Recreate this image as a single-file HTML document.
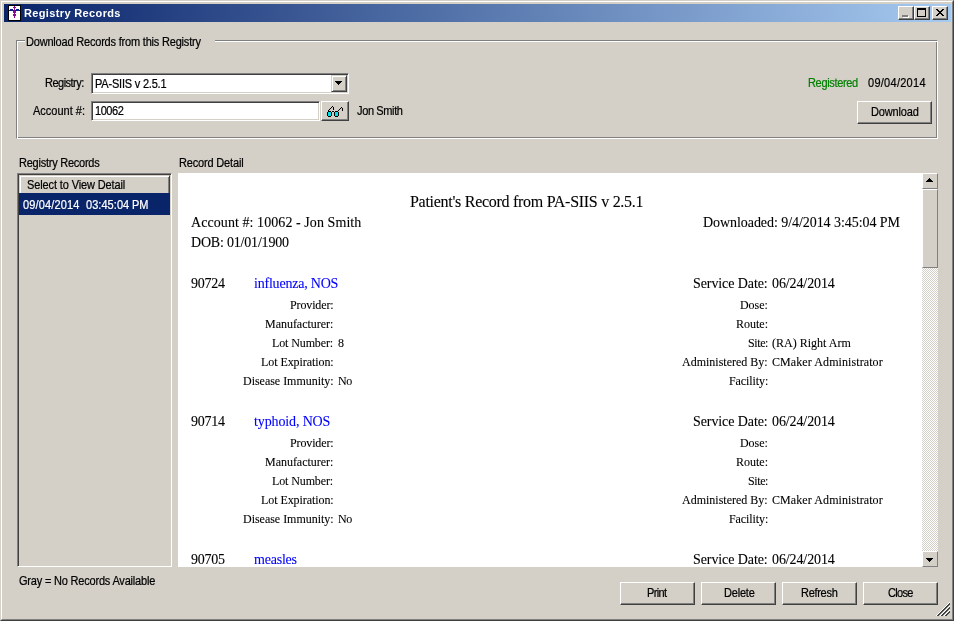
<!DOCTYPE html>
<html><head><meta charset="utf-8"><title>Registry Records</title>
<style>
html,body{margin:0;padding:0;}
body{width:954px;height:621px;overflow:hidden;background:#d4d0c8;position:relative;font-family:'Liberation Sans',sans-serif;font-size:11px;}
div{position:absolute;box-sizing:border-box;}
.t{white-space:pre;line-height:1;will-change:transform;-webkit-text-stroke:0.2px currentColor;}
.btn{background:#d4d0c8;border:1px solid;border-color:#fff #404040 #404040 #fff;box-shadow:inset -1px -1px 0 #808080;}
.sunk{background:#fff;border:1px solid;border-color:#808080 #fff #fff #808080;box-shadow:inset 1px 1px 0 #404040,inset -1px -1px 0 #d4d0c8;}
</style></head><body>

<div style="left:0;top:0;width:954px;height:621px;border:1px solid;border-color:#d4d0c8 #404040 #404040 #d4d0c8;"></div>
<div style="left:1px;top:1px;width:952px;height:619px;border:1px solid;border-color:#fff #808080 #808080 #fff;"></div>
<div style="left:4px;top:4px;width:947px;height:18px;background:linear-gradient(to right,#0a246a,#a6caf0);"></div>
<svg style="position:absolute;left:8px;top:5px" width="13" height="16" shape-rendering="crispEdges">
<rect x="0" y="0" width="13" height="16" fill="#000"/><rect x="1" y="1" width="11" height="14" fill="#fff"/>
<rect x="1" y="5" width="11" height="1" fill="#0a1e8c"/><rect x="2" y="4" width="3" height="1" fill="#0a1e8c"/><rect x="8" y="4" width="3" height="1" fill="#0a1e8c"/>
<rect x="6" y="1" width="1" height="12" fill="#8a0a96"/><rect x="5" y="2" width="3" height="1" fill="#8a0a96"/>
<rect x="5" y="6" width="3" height="2" fill="#8a0a96"/><rect x="5" y="9" width="3" height="2" fill="#8a0a96"/>
</svg>
<div class="btn" style="left:898px;top:6px;width:16px;height:14px;"></div>
<div class="btn" style="left:914px;top:6px;width:16px;height:14px;"></div>
<div class="btn" style="left:932px;top:6px;width:16px;height:14px;"></div>
<div style="left:902px;top:15px;width:6px;height:2px;background:#808080;box-shadow:1px 1px 0 #fff;"></div>
<div style="left:917px;top:8px;width:9px;height:9px;border:1px solid #000;border-top-width:2px;"></div>
<svg style="position:absolute;left:936px;top:9px" width="8" height="7" shape-rendering="crispEdges">
<path d="M0 0h2v1h-2zM6 0h2v1h-2zM1 1h2v1h-2zM5 1h2v1h-2zM2 2h4v1h-4zM3 3h2v1h-2zM2 4h4v1h-4zM1 5h2v1h-2zM5 5h2v1h-2zM0 6h2v1h-2zM6 6h2v1h-2z" fill="#000"/>
</svg>
<div style="left:16px;top:40px;width:922px;height:99px;border:1px solid;border-color:#808080 #fff #fff #808080;box-shadow:inset 1px 1px 0 #fff,inset -1px -1px 0 #808080;"></div>
<div style="left:25px;top:38px;width:190px;height:6px;background:#d4d0c8;"></div>
<div class="sunk" style="left:91px;top:73px;width:258px;height:21px;"></div>
<div style="left:331px;top:75px;width:16px;height:17px;background:#d4d0c8;border:1px solid;border-color:#d4d0c8 #404040 #404040 #d4d0c8;box-shadow:inset 1px 1px 0 #fff,inset -1px -1px 0 #808080;"></div>
<svg style="position:absolute;left:335px;top:81px" width="7" height="4" shape-rendering="crispEdges"><path d="M0 0h7v1h-7zM1 1h5v1h-5zM2 2h3v1h-3zM3 3h1v1h-1z" fill="#000"/></svg>
<div class="sunk" style="left:91px;top:101px;width:229px;height:20px;"></div>
<div class="btn" style="left:321px;top:101px;width:28px;height:20px;"></div>
<svg style="position:absolute;left:327px;top:106px" width="16" height="11" shape-rendering="crispEdges">
<g fill="#000">
<rect x="1" y="5" width="3" height="1"/><rect x="0" y="6" width="1" height="4"/><rect x="4" y="6" width="1" height="4"/><rect x="1" y="10" width="3" height="1"/>
<rect x="8" y="5" width="3" height="1"/><rect x="7" y="6" width="1" height="4"/><rect x="11" y="6" width="1" height="4"/><rect x="8" y="10" width="3" height="1"/>
<rect x="5" y="5" width="2" height="1"/>
<rect x="1" y="4" width="1" height="1"/><rect x="2" y="3" width="1" height="1"/><rect x="3" y="2" width="1" height="1"/><rect x="4" y="1" width="1" height="1"/><rect x="5" y="0" width="1" height="1"/><rect x="6" y="1" width="1" height="3"/>
<rect x="11" y="4" width="1" height="1"/><rect x="12" y="3" width="1" height="1"/><rect x="13" y="2" width="1" height="1"/><rect x="14" y="1" width="1" height="1"/><rect x="15" y="2" width="1" height="3"/>
</g>
<rect x="1" y="6" width="3" height="4" fill="#00e0e8"/><rect x="8" y="6" width="3" height="4" fill="#00e0e8"/>
</svg>
<div class="btn" style="left:857px;top:101px;width:75px;height:23px;"></div>
<div class="sunk" style="left:17px;top:173px;width:155px;height:394px;background:#d4d0c8;"></div>
<div style="left:19px;top:175px;width:151px;height:18px;background:#d4d0c8;border:1px solid;border-width:1px 1px 0 1px;border-color:#d4d0c8 #404040 #404040 #d4d0c8;box-shadow:inset 1px 1px 0 #fff,inset -1px 0 0 #808080;"></div>
<div style="left:19px;top:193px;width:151px;height:22px;background:#0a246a;"></div>
<div id="detail" style="left:178px;top:173px;width:760px;height:394px;background:#fff;overflow:hidden;">
<div class="t" id="ptitle" style="left:232px;top:21px;font-size:16px;color:#000;letter-spacing:-0.281px;font-family:'Liberation Serif', serif;-webkit-text-stroke:0.1px currentColor">Patient&#39;s Record from PA-SIIS v 2.5.1</div>
<div class="t" id="pacc" style="left:13px;top:43px;font-size:14px;color:#000;letter-spacing:0.071px;font-family:'Liberation Serif', serif;-webkit-text-stroke:0.1px currentColor">Account #: 10062 - Jon Smith</div>
<div class="t" id="pdl" style="left:525px;top:43px;font-size:14px;color:#000;letter-spacing:-0.058px;font-family:'Liberation Serif', serif;-webkit-text-stroke:0.1px currentColor">Downloaded: 9/4/2014 3:45:04 PM</div>
<div class="t" id="dob" style="left:13px;top:63px;font-size:14px;color:#000;letter-spacing:-0.195px;font-family:'Liberation Serif', serif;-webkit-text-stroke:0.1px currentColor">DOB: 01/01/1900</div>
<div class="t" id="c90724_0" style="left:13px;top:104px;font-size:14px;color:#000;letter-spacing:-0.275px;font-family:'Liberation Serif', serif;-webkit-text-stroke:0.1px currentColor">90724</div>
<div class="t" id="flu_0" style="left:76px;top:104px;font-size:14px;color:#0000ff;letter-spacing:-0.207px;font-family:'Liberation Serif', serif;-webkit-text-stroke:0.1px currentColor">influenza, NOS</div>
<div class="t" id="sd_0" style="left:515px;top:104px;font-size:14px;color:#000;letter-spacing:-0.091px;font-family:'Liberation Serif', serif;-webkit-text-stroke:0.1px currentColor">Service Date:</div>
<div class="t" id="sdv_0" style="left:594px;top:104px;font-size:14px;color:#000;letter-spacing:-0.109px;font-family:'Liberation Serif', serif;-webkit-text-stroke:0.1px currentColor">06/24/2014</div>
<div class="t" id="prov_0" style="left:111.89999999999998px;top:126px;font-size:12px;color:#000;letter-spacing:-0.134px;font-family:'Liberation Serif', serif;-webkit-text-stroke:0.1px currentColor">Provider:</div>
<div class="t" id="dose_0" style="left:562.2px;top:126px;font-size:12px;color:#000;letter-spacing:-0.05px;font-family:'Liberation Serif', serif;-webkit-text-stroke:0.1px currentColor">Dose:</div>
<div class="t" id="manu_0" style="left:87.19999999999999px;top:145px;font-size:12px;color:#000;letter-spacing:-0.028px;font-family:'Liberation Serif', serif;-webkit-text-stroke:0.1px currentColor">Manufacturer:</div>
<div class="t" id="route_0" style="left:558px;top:145px;font-size:12px;color:#000;letter-spacing:0.0px;font-family:'Liberation Serif', serif;-webkit-text-stroke:0.1px currentColor">Route:</div>
<div class="t" id="lotn_0" style="left:94.30000000000001px;top:164px;font-size:12px;color:#000;letter-spacing:-0.113px;font-family:'Liberation Serif', serif;-webkit-text-stroke:0.1px currentColor">Lot Number:</div>
<div class="t" id="eight_0" style="left:160px;top:164px;font-size:12px;color:#000;letter-spacing:0px;font-family:'Liberation Serif', serif;-webkit-text-stroke:0.1px currentColor">8</div>
<div class="t" id="site_0" style="left:569.6px;top:164px;font-size:12px;color:#000;letter-spacing:-0.404px;font-family:'Liberation Serif', serif;-webkit-text-stroke:0.1px currentColor">Site:</div>
<div class="t" id="ra_0" style="left:594px;top:164px;font-size:12px;color:#000;letter-spacing:0.01px;font-family:'Liberation Serif', serif;-webkit-text-stroke:0.1px currentColor">(RA) Right Arm</div>
<div class="t" id="lote_0" style="left:82.80000000000001px;top:183px;font-size:12px;color:#000;letter-spacing:-0.068px;font-family:'Liberation Serif', serif;-webkit-text-stroke:0.1px currentColor">Lot Expiration:</div>
<div class="t" id="adm_0" style="left:504.29999999999995px;top:183px;font-size:12px;color:#000;letter-spacing:0.002px;font-family:'Liberation Serif', serif;-webkit-text-stroke:0.1px currentColor">Administered By:</div>
<div class="t" id="cmaker_0" style="left:594px;top:183px;font-size:12px;color:#000;letter-spacing:0.09px;font-family:'Liberation Serif', serif;-webkit-text-stroke:0.1px currentColor">CMaker Administrator</div>
<div class="t" id="dis_0" style="left:64.9px;top:202px;font-size:12px;color:#000;letter-spacing:-0.024px;font-family:'Liberation Serif', serif;-webkit-text-stroke:0.1px currentColor">Disease Immunity:</div>
<div class="t" id="no_0" style="left:160px;top:202px;font-size:12px;color:#000;letter-spacing:-0.472px;font-family:'Liberation Serif', serif;-webkit-text-stroke:0.1px currentColor">No</div>
<div class="t" id="fac_0" style="left:550.7px;top:202px;font-size:12px;color:#000;letter-spacing:-0.088px;font-family:'Liberation Serif', serif;-webkit-text-stroke:0.1px currentColor">Facility:</div>
<div class="t" id="c90724_1" style="left:13px;top:242px;font-size:14px;color:#000;letter-spacing:-0.275px;font-family:'Liberation Serif', serif;-webkit-text-stroke:0.1px currentColor">90714</div>
<div class="t" id="typh_1" style="left:76px;top:242px;font-size:14px;color:#0000ff;letter-spacing:-0.127px;font-family:'Liberation Serif', serif;-webkit-text-stroke:0.1px currentColor">typhoid, NOS</div>
<div class="t" id="sd_1" style="left:515px;top:242px;font-size:14px;color:#000;letter-spacing:-0.091px;font-family:'Liberation Serif', serif;-webkit-text-stroke:0.1px currentColor">Service Date:</div>
<div class="t" id="sdv_1" style="left:594px;top:242px;font-size:14px;color:#000;letter-spacing:-0.109px;font-family:'Liberation Serif', serif;-webkit-text-stroke:0.1px currentColor">06/24/2014</div>
<div class="t" id="prov_1" style="left:111.89999999999998px;top:264px;font-size:12px;color:#000;letter-spacing:-0.134px;font-family:'Liberation Serif', serif;-webkit-text-stroke:0.1px currentColor">Provider:</div>
<div class="t" id="dose_1" style="left:562.2px;top:264px;font-size:12px;color:#000;letter-spacing:-0.05px;font-family:'Liberation Serif', serif;-webkit-text-stroke:0.1px currentColor">Dose:</div>
<div class="t" id="manu_1" style="left:87.19999999999999px;top:283px;font-size:12px;color:#000;letter-spacing:-0.028px;font-family:'Liberation Serif', serif;-webkit-text-stroke:0.1px currentColor">Manufacturer:</div>
<div class="t" id="route_1" style="left:558px;top:283px;font-size:12px;color:#000;letter-spacing:0.0px;font-family:'Liberation Serif', serif;-webkit-text-stroke:0.1px currentColor">Route:</div>
<div class="t" id="lotn_1" style="left:94.30000000000001px;top:302px;font-size:12px;color:#000;letter-spacing:-0.113px;font-family:'Liberation Serif', serif;-webkit-text-stroke:0.1px currentColor">Lot Number:</div>
<div class="t" id="site_1" style="left:569.6px;top:302px;font-size:12px;color:#000;letter-spacing:-0.404px;font-family:'Liberation Serif', serif;-webkit-text-stroke:0.1px currentColor">Site:</div>
<div class="t" id="lote_1" style="left:82.80000000000001px;top:321px;font-size:12px;color:#000;letter-spacing:-0.068px;font-family:'Liberation Serif', serif;-webkit-text-stroke:0.1px currentColor">Lot Expiration:</div>
<div class="t" id="adm_1" style="left:504.29999999999995px;top:321px;font-size:12px;color:#000;letter-spacing:0.002px;font-family:'Liberation Serif', serif;-webkit-text-stroke:0.1px currentColor">Administered By:</div>
<div class="t" id="cmaker_1" style="left:594px;top:321px;font-size:12px;color:#000;letter-spacing:0.09px;font-family:'Liberation Serif', serif;-webkit-text-stroke:0.1px currentColor">CMaker Administrator</div>
<div class="t" id="dis_1" style="left:64.9px;top:340px;font-size:12px;color:#000;letter-spacing:-0.024px;font-family:'Liberation Serif', serif;-webkit-text-stroke:0.1px currentColor">Disease Immunity:</div>
<div class="t" id="no_1" style="left:160px;top:340px;font-size:12px;color:#000;letter-spacing:-0.472px;font-family:'Liberation Serif', serif;-webkit-text-stroke:0.1px currentColor">No</div>
<div class="t" id="fac_1" style="left:550.7px;top:340px;font-size:12px;color:#000;letter-spacing:-0.088px;font-family:'Liberation Serif', serif;-webkit-text-stroke:0.1px currentColor">Facility:</div>
<div class="t" id="c90724_2" style="left:13px;top:380px;font-size:14px;color:#000;letter-spacing:-0.275px;font-family:'Liberation Serif', serif;-webkit-text-stroke:0.1px currentColor">90705</div>
<div class="t" id="meas_2" style="left:76px;top:380px;font-size:14px;color:#0000ff;letter-spacing:-0.221px;font-family:'Liberation Serif', serif;-webkit-text-stroke:0.1px currentColor">measles</div>
<div class="t" id="sd_2" style="left:515px;top:380px;font-size:14px;color:#000;letter-spacing:-0.091px;font-family:'Liberation Serif', serif;-webkit-text-stroke:0.1px currentColor">Service Date:</div>
<div class="t" id="sdv_2" style="left:594px;top:380px;font-size:14px;color:#000;letter-spacing:-0.109px;font-family:'Liberation Serif', serif;-webkit-text-stroke:0.1px currentColor">06/24/2014</div>
<div class="t" id="prov_2" style="left:111.89999999999998px;top:402px;font-size:12px;color:#000;letter-spacing:-0.134px;font-family:'Liberation Serif', serif;-webkit-text-stroke:0.1px currentColor">Provider:</div>
<div class="t" id="dose_2" style="left:562.2px;top:402px;font-size:12px;color:#000;letter-spacing:-0.05px;font-family:'Liberation Serif', serif;-webkit-text-stroke:0.1px currentColor">Dose:</div>
<div class="t" id="manu_2" style="left:87.19999999999999px;top:421px;font-size:12px;color:#000;letter-spacing:-0.028px;font-family:'Liberation Serif', serif;-webkit-text-stroke:0.1px currentColor">Manufacturer:</div>
<div class="t" id="route_2" style="left:558px;top:421px;font-size:12px;color:#000;letter-spacing:0.0px;font-family:'Liberation Serif', serif;-webkit-text-stroke:0.1px currentColor">Route:</div>
<div class="t" id="lotn_2" style="left:94.30000000000001px;top:440px;font-size:12px;color:#000;letter-spacing:-0.113px;font-family:'Liberation Serif', serif;-webkit-text-stroke:0.1px currentColor">Lot Number:</div>
<div class="t" id="site_2" style="left:569.6px;top:440px;font-size:12px;color:#000;letter-spacing:-0.404px;font-family:'Liberation Serif', serif;-webkit-text-stroke:0.1px currentColor">Site:</div>
<div class="t" id="lote_2" style="left:82.80000000000001px;top:459px;font-size:12px;color:#000;letter-spacing:-0.068px;font-family:'Liberation Serif', serif;-webkit-text-stroke:0.1px currentColor">Lot Expiration:</div>
<div class="t" id="adm_2" style="left:504.29999999999995px;top:459px;font-size:12px;color:#000;letter-spacing:0.002px;font-family:'Liberation Serif', serif;-webkit-text-stroke:0.1px currentColor">Administered By:</div>
<div class="t" id="dis_2" style="left:64.9px;top:478px;font-size:12px;color:#000;letter-spacing:-0.024px;font-family:'Liberation Serif', serif;-webkit-text-stroke:0.1px currentColor">Disease Immunity:</div>
<div class="t" id="fac_2" style="left:550.7px;top:478px;font-size:12px;color:#000;letter-spacing:-0.088px;font-family:'Liberation Serif', serif;-webkit-text-stroke:0.1px currentColor">Facility:</div>
</div>
<div style="left:922px;top:173px;width:16px;height:394px;background-color:#fff;background-image:conic-gradient(#d4d0c8 25%,#fff 0 50%,#d4d0c8 0 75%,#fff 0);background-size:2px 2px;"></div>
<div style="left:922px;top:173px;width:16px;height:16px;background:#d4d0c8;border:1px solid;border-color:#fff #808080 #808080 #fff;"></div>
<div style="left:922px;top:189px;width:16px;height:79px;background:#d4d0c8;border:1px solid;border-color:#fff #808080 #808080 #fff;"></div>
<div style="left:922px;top:551px;width:16px;height:16px;background:#d4d0c8;border:1px solid;border-color:#fff #808080 #808080 #fff;"></div>
<svg style="position:absolute;left:926px;top:178px" width="7" height="4" shape-rendering="crispEdges"><path d="M3 0h1v1h-1zM2 1h3v1h-3zM1 2h5v1h-5zM0 3h7v1h-7z" fill="#000"/></svg>
<svg style="position:absolute;left:926px;top:558px" width="7" height="4" shape-rendering="crispEdges"><path d="M0 0h7v1h-7zM1 1h5v1h-5zM2 2h3v1h-3zM3 3h1v1h-1z" fill="#000"/></svg>
<div class="btn" style="left:620px;top:582px;width:75px;height:23px;"></div>
<div class="btn" style="left:701px;top:582px;width:75px;height:23px;"></div>
<div class="btn" style="left:782px;top:582px;width:75px;height:23px;"></div>
<div class="btn" style="left:863px;top:582px;width:75px;height:23px;"></div>
<svg style="position:absolute;left:936px;top:602px" width="14" height="14" shape-rendering="crispEdges"><path d="M0 13h1v1h-1zM1 12h1v1h-1zM2 11h1v1h-1zM3 10h1v1h-1zM4 9h1v1h-1zM4 13h1v1h-1zM5 8h1v1h-1zM5 12h1v1h-1zM6 7h1v1h-1zM6 11h1v1h-1zM7 6h1v1h-1zM7 10h1v1h-1zM8 5h1v1h-1zM8 9h1v1h-1zM8 13h1v1h-1zM9 4h1v1h-1zM9 8h1v1h-1zM9 12h1v1h-1zM10 3h1v1h-1zM10 7h1v1h-1zM10 11h1v1h-1zM11 2h1v1h-1zM11 6h1v1h-1zM11 10h1v1h-1zM12 1h1v1h-1zM12 5h1v1h-1zM12 9h1v1h-1zM13 0h1v1h-1zM13 4h1v1h-1zM13 8h1v1h-1z" fill="#fff"/><path d="M1 13h1v1h-1zM2 12h1v1h-1zM2 13h1v1h-1zM3 11h1v1h-1zM3 12h1v1h-1zM4 10h1v1h-1zM4 11h1v1h-1zM5 9h1v1h-1zM5 10h1v1h-1zM5 13h1v1h-1zM6 8h1v1h-1zM6 9h1v1h-1zM6 12h1v1h-1zM6 13h1v1h-1zM7 7h1v1h-1zM7 8h1v1h-1zM7 11h1v1h-1zM7 12h1v1h-1zM8 6h1v1h-1zM8 7h1v1h-1zM8 10h1v1h-1zM8 11h1v1h-1zM9 5h1v1h-1zM9 6h1v1h-1zM9 9h1v1h-1zM9 10h1v1h-1zM9 13h1v1h-1zM10 4h1v1h-1zM10 5h1v1h-1zM10 8h1v1h-1zM10 9h1v1h-1zM10 12h1v1h-1zM10 13h1v1h-1zM11 3h1v1h-1zM11 4h1v1h-1zM11 7h1v1h-1zM11 8h1v1h-1zM11 11h1v1h-1zM11 12h1v1h-1zM12 2h1v1h-1zM12 3h1v1h-1zM12 6h1v1h-1zM12 7h1v1h-1zM12 10h1v1h-1zM12 11h1v1h-1zM13 1h1v1h-1zM13 2h1v1h-1zM13 5h1v1h-1zM13 6h1v1h-1zM13 9h1v1h-1zM13 10h1v1h-1z" fill="#454545"/></svg>
<div class="t" id="title" style="left:24px;top:8px;font-size:11px;color:#fff;letter-spacing:0.36px;font-weight:bold;-webkit-text-stroke:0">Registry Records</div>
<div class="t" id="grp" style="left:26px;top:36px;font-size:11px;color:#000;letter-spacing:-0.193px;transform:scaleY(1.125);transform-origin:0 0">Download Records from this Registry</div>
<div class="t" id="reg" style="left:45px;top:77px;font-size:11px;color:#000;letter-spacing:-0.513px;transform:scaleY(1.125);transform-origin:0 0">Registry:</div>
<div class="t" id="acc" style="left:33px;top:105px;font-size:11px;color:#000;letter-spacing:0.002px;transform:scaleY(1.125);transform-origin:0 0">Account #:</div>
<div class="t" id="pasiis" style="left:95px;top:78px;font-size:11px;color:#000;letter-spacing:-0.199px;transform:scaleY(1.125);transform-origin:0 0">PA-SIIS v 2.5.1</div>
<div class="t" id="n10062" style="left:95px;top:105px;font-size:11px;color:#000;letter-spacing:-0.448px;transform:scaleY(1.125);transform-origin:0 0">10062</div>
<div class="t" id="jon" style="left:357px;top:105px;font-size:11px;color:#000;letter-spacing:-0.365px;transform:scaleY(1.125);transform-origin:0 0">Jon Smith</div>
<div class="t" id="registered" style="left:808px;top:77px;font-size:11px;color:#008000;letter-spacing:-0.334px;transform:scaleY(1.125);transform-origin:0 0">Registered</div>
<div class="t" id="date" style="left:868px;top:77px;font-size:11px;color:#000;letter-spacing:0.271px;transform:scaleY(1.125);transform-origin:0 0">09/04/2014</div>
<div class="t" id="download" style="left:871px;top:106px;font-size:11px;color:#000;letter-spacing:-0.16px;transform:scaleY(1.125);transform-origin:0 0">Download</div>
<div class="t" id="rr" style="left:19px;top:157px;font-size:11px;color:#000;letter-spacing:-0.244px;transform:scaleY(1.125);transform-origin:0 0">Registry Records</div>
<div class="t" id="rd" style="left:179px;top:157px;font-size:11px;color:#000;letter-spacing:-0.17px;transform:scaleY(1.125);transform-origin:0 0">Record Detail</div>
<div class="t" id="sel" style="left:27px;top:179px;font-size:11px;color:#000;letter-spacing:-0.12px;transform:scaleY(1.125);transform-origin:0 0">Select to View Detail</div>
<div class="t" id="itemd" style="left:23px;top:199px;font-size:11px;color:#fff;letter-spacing:0.15px;transform:scaleY(1.125);transform-origin:0 0">09/04/2014</div>
<div class="t" id="itemt" style="left:86px;top:199px;font-size:11px;color:#fff;letter-spacing:0.05px;transform:scaleY(1.125);transform-origin:0 0">03:45:04</div>
<div class="t" id="itemp" style="left:132px;top:199px;font-size:11px;color:#fff;letter-spacing:0px;transform:scaleY(1.125);transform-origin:0 0">PM</div>
<div class="t" id="gray" style="left:19px;top:575px;font-size:11px;color:#000;letter-spacing:-0.194px;transform:scaleY(1.125);transform-origin:0 0">Gray = No Records Available</div>
<div class="t" id="print" style="left:647px;top:587px;font-size:11px;color:#000;letter-spacing:-0.631px;transform:scaleY(1.125);transform-origin:0 0">Print</div>
<div class="t" id="delete" style="left:724px;top:587px;font-size:11px;color:#000;letter-spacing:-0.199px;transform:scaleY(1.125);transform-origin:0 0">Delete</div>
<div class="t" id="refresh" style="left:801px;top:587px;font-size:11px;color:#000;letter-spacing:-0.289px;transform:scaleY(1.125);transform-origin:0 0">Refresh</div>
<div class="t" id="close" style="left:888px;top:587px;font-size:11px;color:#000;letter-spacing:-0.706px;transform:scaleY(1.125);transform-origin:0 0">Close</div>
</body></html>
